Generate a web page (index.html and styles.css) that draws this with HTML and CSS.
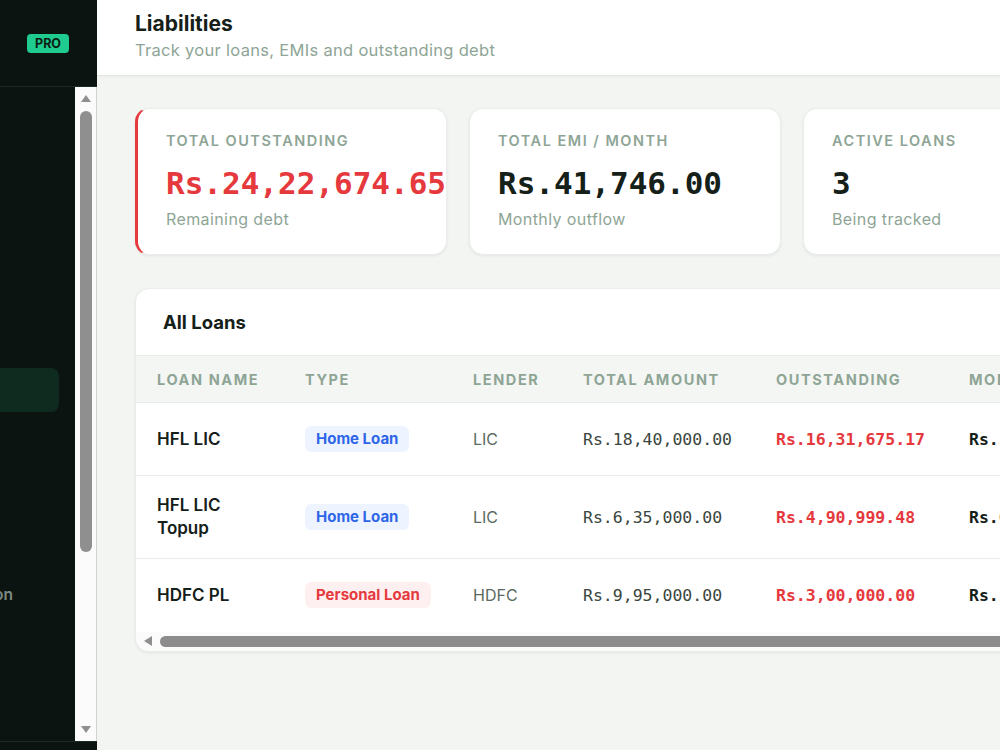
FILE: index.html
```html
<!DOCTYPE html>
<html>
    <head>
        <title>Liabilities</title>
        <link rel="stylesheet" href="styles.css">
    </head>
    <body>
        <aside class="sidebar">
            <div class="brand">
                <div class="brand-inner">
                    <span class="brand-name">Ledger</span>
                    <span class="pro">PRO</span>
                </div>
            </div>
            <div class="nav">
                <nav class="nav-view">
                    <div class="nav-inner">
                        <a class="nav-item">Dashboard</a>
                        <a class="nav-item">Income</a>
                        <a class="nav-item">Expenses</a>
                        <a class="nav-item">Assets</a>
                        <a class="nav-item">Budgets</a>
                        <a class="nav-item active">Liabilities</a>
                        <a class="nav-item">Goals</a>
                        <a class="nav-item">Reports</a>
                        <a class="nav-item">Insurance</a>
                        <a class="nav-item long">Tax Optimization</a>
                        <a class="nav-item">Settings</a>
                    </div>
                </nav>
                <div class="vscroll">
                    <div class="arrow-btn"><span class="tri up"></span></div>
                    <div class="vthumb"></div>
                    <div class="vtrack"></div>
                    <div class="arrow-btn"><span class="tri down"></span></div>
                </div>
            </div>
            <div class="side-footer"></div>
        </aside>

        <main class="main">
            <header class="page-header">
                <h1>Liabilities</h1>
                <p>Track your loans, EMIs and outstanding debt</p>
            </header>

            <div class="content">
                <div class="stats">
                    <div class="stat danger">
                        <div class="stat-label">Total Outstanding</div>
                        <div class="stat-value red">Rs.24,22,674.65</div>
                        <div class="stat-sub">Remaining debt</div>
                    </div>
                    <div class="stat">
                        <div class="stat-label">Total EMI / Month</div>
                        <div class="stat-value">Rs.41,746.00</div>
                        <div class="stat-sub">Monthly outflow</div>
                    </div>
                    <div class="stat">
                        <div class="stat-label">Active Loans</div>
                        <div class="stat-value">3</div>
                        <div class="stat-sub">Being tracked</div>
                    </div>
                    <div class="stat">
                        <div class="stat-label">Avg. Interest</div>
                        <div class="stat-value">9.10%</div>
                        <div class="stat-sub">Weighted rate</div>
                    </div>
                </div>

                <div class="panel">
                    <div class="panel-head">
                        <h2>All Loans</h2>
                    </div>
                    <div class="table-wrap">
                        <table class="loans">
                            <thead>
                                <tr>
                                    <th class="c-name">Loan Name</th>
                                    <th class="c-type">Type</th>
                                    <th class="c-lender">Lender</th>
                                    <th class="c-amt">Total Amount</th>
                                    <th class="c-amt">Outstanding</th>
                                    <th class="c-amt">Monthly EMI</th>
                                    <th class="c-rate">Interest</th>
                                    <th class="c-rate">Tenure</th>
                                </tr>
                            </thead>
                            <tbody>
                                <tr>
                                    <td class="name">HFL LIC</td>
                                    <td><span class="badge home">Home Loan</span></td>
                                    <td class="lender">LIC</td>
                                    <td class="mono">Rs.18,40,000.00</td>
                                    <td class="mono out">Rs.16,31,675.17</td>
                                    <td class="mono emi">Rs.17,520.00</td>
                                    <td class="lender">8.50%</td>
                                    <td class="lender">240 mo</td>
                                </tr>
                                <tr>
                                    <td class="name">HFL LIC Topup</td>
                                    <td><span class="badge home">Home Loan</span></td>
                                    <td class="lender">LIC</td>
                                    <td class="mono">Rs.6,35,000.00</td>
                                    <td class="mono out">Rs.4,90,999.48</td>
                                    <td class="mono emi">Rs.6,226.00</td>
                                    <td class="lender">8.75%</td>
                                    <td class="lender">180 mo</td>
                                </tr>
                                <tr>
                                    <td class="name">HDFC PL</td>
                                    <td><span class="badge personal">Personal Loan</span></td>
                                    <td class="lender">HDFC</td>
                                    <td class="mono">Rs.9,95,000.00</td>
                                    <td class="mono out">Rs.3,00,000.00</td>
                                    <td class="mono emi">Rs.18,000.00</td>
                                    <td class="lender">11.25%</td>
                                    <td class="lender">60 mo</td>
                                </tr>
                            </tbody>
                        </table>
                    </div>
                    <div class="hscroll">
                        <div class="arrow-btn h"><span class="tri left"></span></div>
                        <div class="hthumb"></div>
                    </div>
                </div>
            </div>
        </main>
    </body>
</html>
```

FILE: styles.css
```css
html, body {
    height: 100%;
}
body {
    margin: 0;
    padding: 0;
    display: flex;
    overflow: hidden;
    font-family: "Inter", "Noto Sans", sans-serif;
    background-color: #f3f5f3;
    color: #142018;
}

/* sidebar */
.sidebar {
    width: 97px;
    flex-shrink: 0;
    height: 100vh;
    background-color: #0c1411;
    display: flex;
    flex-direction: column;
    overflow: hidden;
}

.brand {
    height: 86px;
    flex-shrink: 0;
    border-bottom: 1px solid #1e2924;
    overflow: hidden;
}
.brand-inner {
    width: 240px;
    margin-left: -165px;
    height: 100%;
    display: flex;
    align-items: center;
    justify-content: space-between;
    padding: 0 6px 0 20px;
    box-sizing: border-box;
}
.brand-name {
    color: #e9f1ec;
    font-weight: 700;
    font-size: 18px;
}
.pro {
    background-color: #1fcb8f;
    color: #0b1d13;
    font-size: 12.5px;
    font-weight: 700;
    padding: 3px 8px;
    border-radius: 4px;
    line-height: 13px;
}

.nav {
    height: 654px;
    flex-shrink: 0;
    display: flex;
}
.nav-view {
    flex: 1;
    overflow: hidden;
}
.nav-inner {
    width: 240px;
    margin-left: -165px;
    padding: 26px 16px 0;
    box-sizing: border-box;
}
.nav-item {
    display: flex;
    align-items: center;
    height: 44px;
    margin-bottom: 7px;
    padding-left: 44px;
    border-radius: 8px;
    color: #7d8a83;
    font-size: 15px;
    font-weight: 600;
    white-space: nowrap;
}
.nav-item.active {
    background-color: #0f2a1f;
    color: #1ecf8e;
}
.nav-item.long {
    padding-left: 36px;
    font-size: 15.5px;
}

.side-footer {
    border-top: 1px solid #1e2924;
    height: 80px;
    flex-shrink: 0;
}

/* scrollbars */
.vscroll {
    width: 21px;
    flex-shrink: 0;
    background-color: #fbfbfb;
    border-right: 1px solid #cfd3d0;
    display: flex;
    flex-direction: column;
}
.arrow-btn {
    height: 20px;
    display: flex;
    align-items: center;
    justify-content: center;
    flex-shrink: 0;
}
.arrow-btn.h {
    width: 20px;
    height: 100%;
    margin-left: 2px;
}
.vthumb {
    height: 441px;
    margin: 4px 4px 0 5px;
    background-color: #8f8f8f;
    border-radius: 6px;
}
.vtrack {
    flex: 1;
}
.tri {
    width: 0;
    height: 0;
    border: 5px solid transparent;
}
.tri.up {
    border-top: 0;
    border-bottom: 7px solid #8f8f8f;
    margin-top: 2px;
}
.tri.down {
    border-bottom: 0;
    border-top: 7px solid #8f8f8f;
    margin-bottom: 4px;
}
.tri.left {
    border-left: 0;
    border-right: 8px solid #8f8f8f;
    border-top-width: 5px;
    border-bottom-width: 5px;
}

.hscroll {
    height: 19px;
    background-color: #fbfbfb;
    display: flex;
    align-items: center;
}
.hthumb {
    flex: 1;
    height: 11px;
    margin-left: 2px;
    background-color: #8c8c8c;
    border-radius: 6px;
}

/* main */
.main {
    flex: 1;
    min-width: 0;
    height: 100vh;
    overflow: hidden;
}

.page-header {
    background-color: #fff;
    height: 76px;
    border-bottom: 1px solid #e4e8e4;
    box-shadow: 0 1px 3px rgba(0, 0, 0, 0.04);
    padding: 11px 38px 0;
    box-sizing: border-box;
    width: 1500px;
}
.page-header h1 {
    margin: 0;
    font-size: 21px;
    line-height: 26px;
    font-weight: 700;
    color: #142018;
}
.page-header p {
    margin: 2px 0 0;
    font-size: 16.5px;
    letter-spacing: 0.3px;
    line-height: 22px;
    color: #8ea596;
}

.content {
    padding: 32px 38px;
    width: 1390px;
    box-sizing: border-box;
}

.stats {
    display: grid;
    grid-template-columns: repeat(4, 312px);
    gap: 22px;
}

.stat {
    background-color: #fff;
    border-radius: 14px;
    box-shadow: 0 1px 3px rgba(20, 40, 30, 0.08);
    border: 1px solid #eaeeea;
    padding: 22px 28px 0;
    height: 147px;
    box-sizing: border-box;
    overflow: hidden;
}
.stat.danger {
    border-left: 3px solid #e5393e;
    padding-left: 28px;
}
.stat-label {
    font-size: 14.5px;
    font-weight: 600;
    text-transform: uppercase;
    letter-spacing: 1.5px;
    color: #8ea596;
    line-height: 20px;
}
.stat-value {
    font-family: "DejaVu Sans Mono", "Liberation Mono", monospace;
    font-size: 31px;
    font-weight: 700;
    line-height: 40px;
    margin-top: 12px;
    white-space: nowrap;
    color: #142018;
}
.stat-value.red {
    color: #e5393e;
}
.stat-sub {
    font-size: 16px;
    letter-spacing: 0.4px;
    color: #8ea596;
    margin-top: 6px;
}

/* loans table */
.panel {
    margin-top: 33px;
    background-color: #fff;
    border-radius: 14px;
    border: 1px solid #eaeeea;
    box-shadow: 0 1px 3px rgba(20, 40, 30, 0.08);
    overflow: hidden;
}
.panel-head {
    height: 66px;
    display: flex;
    align-items: center;
    padding: 0 27px;
    border-bottom: 1px solid #e8ece8;
}
.panel-head h2 {
    margin: 0;
    font-size: 18.5px;
    font-weight: 700;
}

.table-wrap {
    overflow: hidden;
}
.loans {
    border-collapse: collapse;
    width: 1560px;
}
.loans th {
    background-color: #f4f6f3;
    height: 46px;
    padding: 0 21px;
    text-align: left;
    font-size: 14.5px;
    font-weight: 700;
    letter-spacing: 1.6px;
    text-transform: uppercase;
    color: #8ea596;
    border-bottom: 1px solid #e8ece8;
    white-space: nowrap;
}
.loans td {
    height: 73px;
    padding: 18px 21px;
    box-sizing: border-box;
    border-bottom: 1px solid #e8ece8;
    font-size: 16px;
    color: #5b6b61;
}
.loans tr:last-child td {
    border-bottom: none;
}
.c-name { width: 106px; }
.c-type { width: 126px; }
.c-lender { width: 68px; }
.c-amt { width: 151px; }

.loans td.name {
    font-size: 17px;
    font-weight: 600;
    line-height: 23px;
    color: #142018;
}
.mono {
    font-family: "DejaVu Sans Mono", "Liberation Mono", monospace;
    white-space: nowrap;
}
.loans td.mono {
    font-size: 16.5px;
    color: #3a463e;
}
.loans td.out {
    color: #e5393e;
    font-weight: 700;
}
.loans td.emi {
    color: #142018;
    font-weight: 700;
}

.badge {
    display: inline-block;
    padding: 4px 11px;
    border-radius: 6px;
    font-size: 15px;
    font-weight: 700;
    line-height: 18px;
    white-space: nowrap;
}
.badge.home {
    background-color: #eef4ff;
    color: #2f66e8;
}
.badge.personal {
    background-color: #fef0f0;
    color: #e5393e;
}
```
